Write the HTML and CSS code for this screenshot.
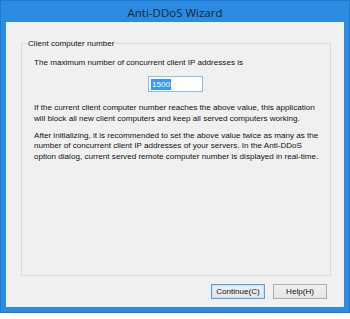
FILE: index.html
```html
<!DOCTYPE html>
<html>
<head>
<meta charset="utf-8">
<link rel="stylesheet" href="styles.css">
</head>
<body>
<div class="window">
  <div class="titlebar">Anti-DDoS Wizard</div>
  <div class="client">
    <div class="group">
      <div class="legend">Client computer number</div>
      <p class="line">The maximum number of concurrent client IP addresses is</p>
      <div class="input-row"><div class="input"><span class="sel">1500</span></div></div>
      <p class="para">If the current client computer number reaches the above value, this application<br>will block all new client computers and keep all served computers working.</p>
      <p class="para second">After initializing, it is recommended to set the above value twice as many as the<br>number of concurrent client IP addresses of your servers. In the Anti-DDoS<br>option dialog, current served remote computer number is displayed in real-time.</p>
    </div>
    <div class="buttons">
      <div class="btn default">Continue(C)</div>
      <div class="btn">Help(H)</div>
    </div>
  </div>
</div>
</body>
</html>
```

FILE: styles.css
```css
html, body {
  margin: 0;
  padding: 0;
  background: #ffffff;
}
.window {
  width: 350px;
  height: 313px;
  box-sizing: border-box;
  background: #2b8ae2;
  border: 1px solid #2378c8;
  display: flex;
  flex-direction: column;
}
.titlebar {
  height: 21px;
  line-height: 23px;
  text-align: center;
  font-family: "Open Sans", "Noto Sans", sans-serif;
  font-size: 11.5px;
  color: #1a2530;
}
.client {
  flex: 1;
  margin: 0 5px 5px 5px;
  background: #f0f0f0;
  display: flex;
  flex-direction: column;
  font-family: "Liberation Sans", Arial, sans-serif;
  font-size: 8.1px;
  color: #111;
}
.group {
  margin: 21px 0 0 15px;
  width: 310px;
  height: 233px;
  box-sizing: border-box;
  border: 1px solid #dcdcdc;
  padding: 0 12px;
}
.legend {
  width: fit-content;
  margin: -6px 0 0 -7px;
  padding: 0 2px 0 1px;
  background: #f0f0f0;
  line-height: 11px;
}
.line {
  margin: 9px 0 0 0;
  line-height: 10.6px;
  white-space: nowrap;
}
.input-row {
  display: flex;
  justify-content: center;
  margin-top: 7px;
  margin-left: -1px;
}
.input {
  width: 55px;
  height: 16px;
  box-sizing: border-box;
  border: 1px solid #8cbcec;
  background: #fff;
  padding: 2px 0 0 2px;
  line-height: 10px;
}
.sel {
  display: inline-block;
  background: #3399ff;
  color: #fff;
  padding: 0 1px;
  line-height: 11px;
}
.para {
  margin: 11.5px 0 0 0;
  line-height: 10.6px;
  white-space: nowrap;
}
.para.second {
  margin-top: 6.5px;
}
.buttons {
  display: flex;
  justify-content: flex-end;
  gap: 8px;
  margin: 8px 17px 0 0;
}
.btn {
  width: 54px;
  height: 15px;
  box-sizing: border-box;
  border: 1px solid #adadad;
  background: linear-gradient(#f0f0f0, #e5e5e5);
  text-align: center;
  line-height: 13px;
  color: #111;
}
.btn.default {
  border-color: #5aa0e6;
  box-shadow: inset 0 0 0 1px #c6e0f8;
}
```
